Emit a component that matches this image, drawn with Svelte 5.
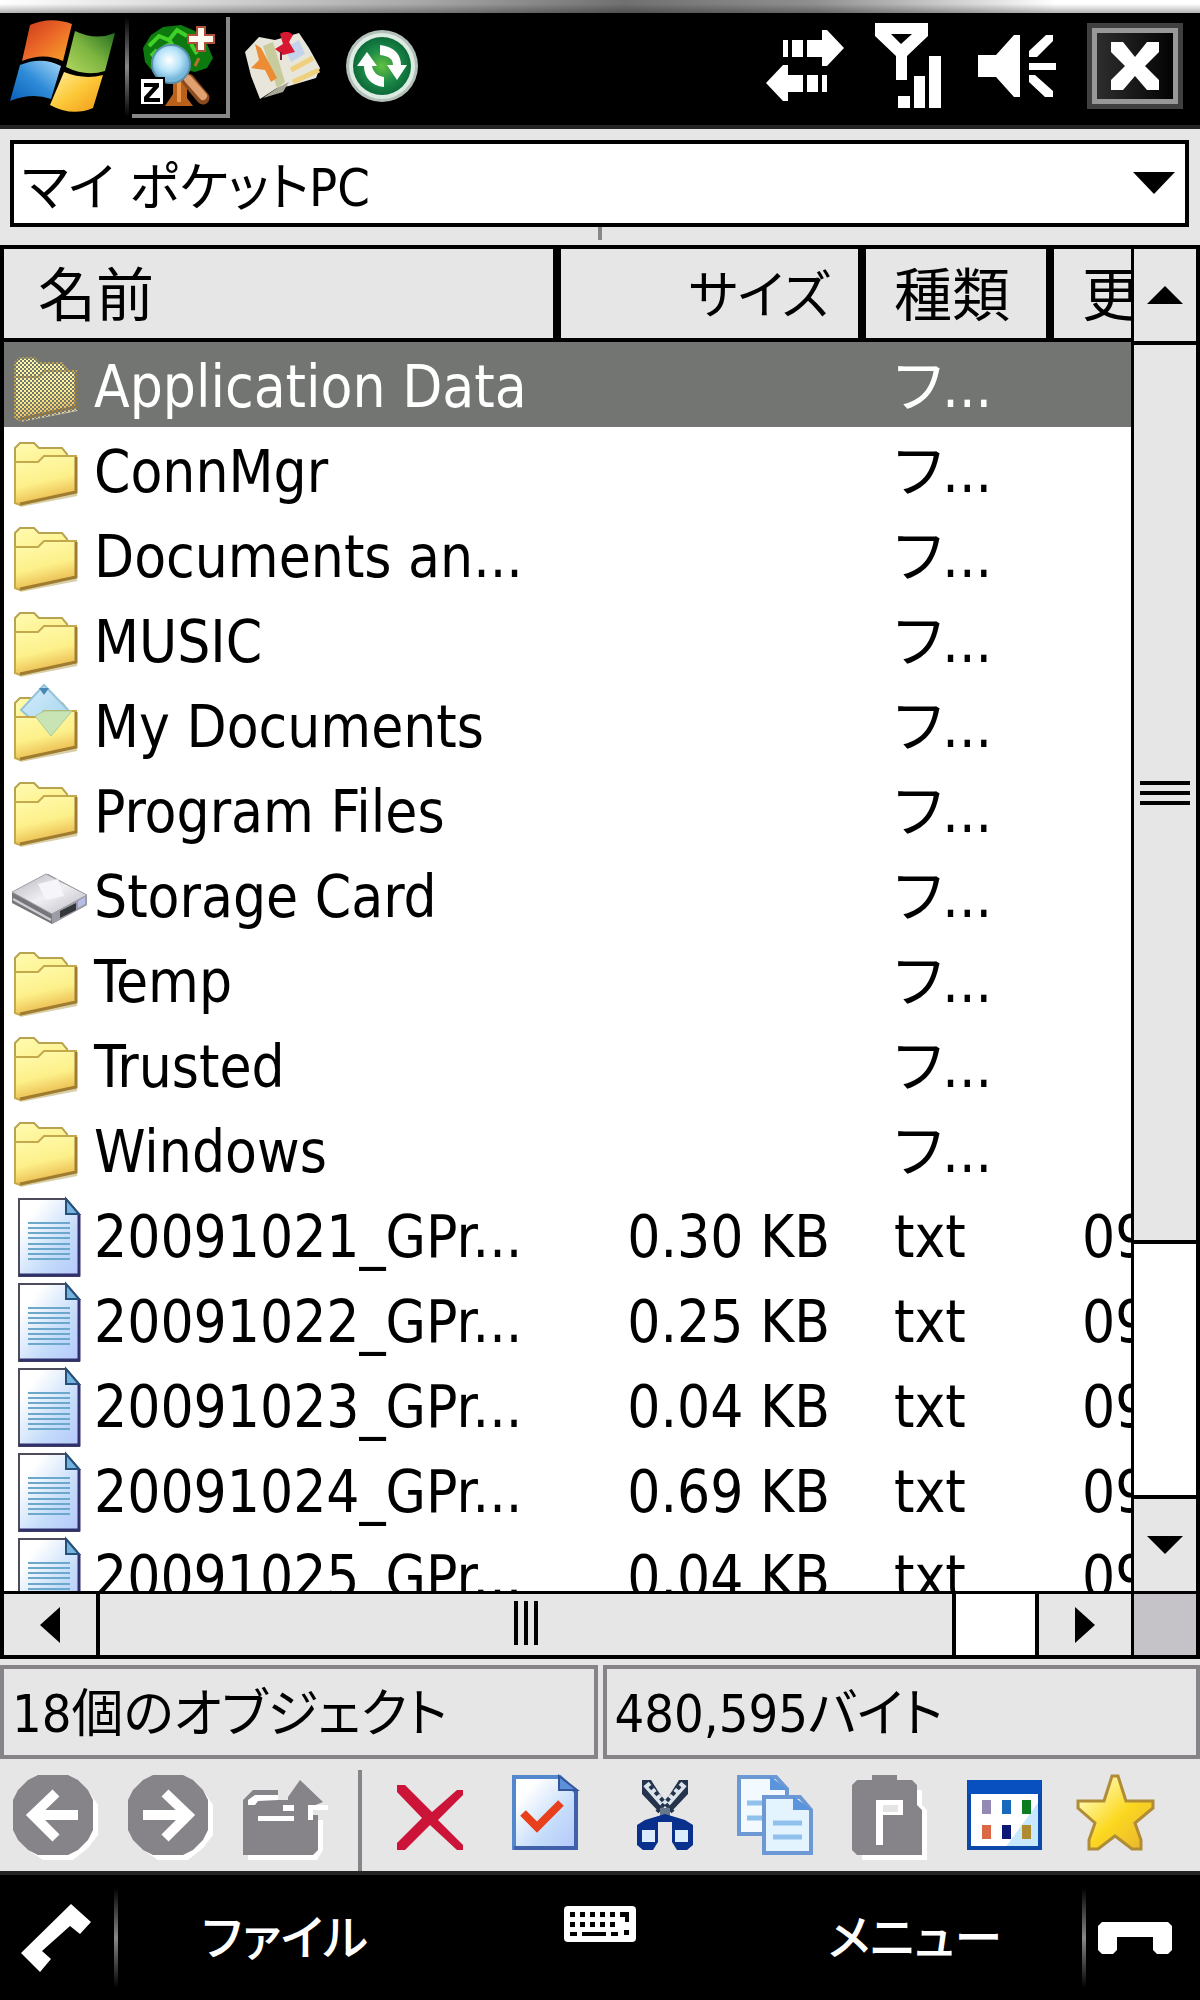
<script>
    const entries = [
        { name: 'Application Data', icon: 'folder', type: 'フ...' },
        { name: 'ConnMgr', icon: 'folder', type: 'フ...' },
        { name: 'Documents an...', icon: 'folder', type: 'フ...' },
        { name: 'MUSIC', icon: 'folder', type: 'フ...' },
        { name: 'My Documents', icon: 'documents', type: 'フ...' },
        { name: 'Program Files', icon: 'folder', type: 'フ...' },
        { name: 'Storage Card', icon: 'drive', type: 'フ...' },
        { name: 'Temp', icon: 'folder', type: 'フ...' },
        { name: 'Trusted', icon: 'folder', type: 'フ...' },
        { name: 'Windows', icon: 'folder', type: 'フ...' },
        { name: '20091021_GPr...', icon: 'text', size: '0.30 KB', type: 'txt', date: '09' },
        { name: '20091022_GPr...', icon: 'text', size: '0.25 KB', type: 'txt', date: '09' },
        { name: '20091023_GPr...', icon: 'text', size: '0.04 KB', type: 'txt', date: '09' },
        { name: '20091024_GPr...', icon: 'text', size: '0.69 KB', type: 'txt', date: '09' },
        { name: '20091025_GPr...', icon: 'text', size: '0.04 KB', type: 'txt', date: '09' }
    ];

    let selected = $state(0);
</script>

<!-- shared gradients -->
<svg class="defs" width="0" height="0" aria-hidden="true">
    <defs>
        <linearGradient id="gFolder" x1="0" y1="0" x2="0.3" y2="1">
            <stop offset="0" stop-color="#fffbb0" />
            <stop offset="0.6" stop-color="#fdf08a" />
            <stop offset="1" stop-color="#e9b94c" />
        </linearGradient>
        <linearGradient id="gPaper" x1="0" y1="0" x2="1" y2="1">
            <stop offset="0.2" stop-color="#ffffff" />
            <stop offset="0.65" stop-color="#c4dcfa" />
            <stop offset="1" stop-color="#b4c8fb" />
        </linearGradient>
        <linearGradient id="gBlueSheet" x1="0" y1="0" x2="1" y2="1">
            <stop offset="0" stop-color="#d6eefa" />
            <stop offset="1" stop-color="#9dd0ee" />
        </linearGradient>
        <linearGradient id="gMetal" x1="0" y1="0" x2="1" y2="1">
            <stop offset="0" stop-color="#b4b4b8" />
            <stop offset="0.5" stop-color="#f0f0f4" />
            <stop offset="1" stop-color="#b8b8c0" />
        </linearGradient>
        <linearGradient id="gRed" x1="0" y1="0" x2="1" y2="1">
            <stop offset="0" stop-color="#c8361a" />
            <stop offset="0.5" stop-color="#ec6a28" />
            <stop offset="1" stop-color="#f7a828" />
        </linearGradient>
        <linearGradient id="gGreen" x1="0" y1="1" x2="1" y2="0">
            <stop offset="0" stop-color="#b4d860" />
            <stop offset="0.5" stop-color="#7cb440" />
            <stop offset="1" stop-color="#1f6a20" />
        </linearGradient>
        <linearGradient id="gBlue" x1="0" y1="1" x2="1" y2="0">
            <stop offset="0" stop-color="#0a60b8" />
            <stop offset="0.5" stop-color="#2f8cd8" />
            <stop offset="1" stop-color="#a8d8f8" />
        </linearGradient>
        <linearGradient id="gYellow" x1="0" y1="0" x2="1" y2="1">
            <stop offset="0" stop-color="#fff0a0" />
            <stop offset="0.5" stop-color="#fcc838" />
            <stop offset="1" stop-color="#f09818" />
        </linearGradient>
        <radialGradient id="gSync">
            <stop offset="0" stop-color="#62c040" />
            <stop offset="0.6" stop-color="#1c8a48" />
            <stop offset="1" stop-color="#0c6a38" />
        </radialGradient>
        <radialGradient id="gLens" cx="0.45" cy="0.4">
            <stop offset="0" stop-color="#ffffff" />
            <stop offset="0.6" stop-color="#b8e4f8" />
            <stop offset="1" stop-color="#78b8dc" />
        </radialGradient>
        <linearGradient id="gStar" x1="0" y1="0" x2="1" y2="1">
            <stop offset="0.2" stop-color="#fff6a0" />
            <stop offset="0.55" stop-color="#fbd820" />
            <stop offset="1" stop-color="#e8b030" />
        </linearGradient>
        <pattern id="pDither" width="4" height="4" patternUnits="userSpaceOnUse">
            <rect width="2" height="2" fill="#737572" />
            <rect x="2" y="2" width="2" height="2" fill="#737572" />
        </pattern>
    </defs>
</svg>

<div class="screen">
    <div class="edge"></div>

    <header class="titlebar">
        <button class="start" aria-label="Start">
            <svg width="108" height="96" viewBox="0 0 108 96">
                <path d="M20 6 Q40 -3 62 5 L53 42 Q34 33 12 42 Z" fill="url(#gRed)" />
                <path d="M65 12 Q86 22 105 14 L95 52 Q76 58 56 48 Z" fill="url(#gGreen)" />
                <path d="M10 46 Q32 37 51 47 L41 80 Q22 73 0 82 Z" fill="url(#gBlue)" />
                <path d="M54 53 Q74 61 93 56 L83 89 Q62 98 40 86 Z" fill="url(#gYellow)" />
            </svg>
        </button>
        <span class="divider"></span>
        <button class="task active" aria-label="File manager">
            <svg width="80" height="84" viewBox="0 0 80 84">
                <path d="M34 52 L48 52 L48 74 L54 82 L26 82 L34 70 Z" fill="#b8601c" />
                <path d="M40 54 V78" stroke="#e89848" stroke-width="4" />
                <path d="M6 38 L4 24 L12 11 L24 3 L42 1 L56 7 L68 20 L74 34 L68 44 L56 48 L40 44 L14 48 Z" fill="#0d7a10" />
                <path d="M10 22 L20 12 L30 16 L38 6 L48 12 M24 24 L34 18 M12 32 L18 26 M52 20 L58 30" stroke="#42d028" stroke-width="4" fill="none" />
                <path d="M56 42 L60 34" stroke="#b8702c" stroke-width="3" />
                <path d="M49 56 L64 74" stroke="#8a4c20" stroke-width="13" stroke-linecap="round" />
                <path d="M49 55 L64 72" stroke="#e0a070" stroke-width="8" stroke-linecap="round" />
                <circle cx="32" cy="40" r="19" fill="url(#gLens)" stroke="#5c90a8" stroke-width="2" />
                <path d="M58 3 h8 v8 h9 v8 h-9 v8 h-8 v-8 h-9 v-8 h9 Z" fill="#fffaf0" stroke="#b05038" stroke-width="2" />
                <rect x="1" y="54" width="24" height="27" fill="#fff" stroke="#000" stroke-width="2" />
                <path d="M5 59 H20 V63 L10 74 H21 V78 H5 V73 L14 63 H5 Z" fill="#000" />
            </svg>
        </button>
        <button class="task" aria-label="Map">
            <svg width="78" height="68" viewBox="0 0 78 68">
                <path d="M2 20 L16 5 L32 8 L56 1 L66 16 L77 36 L73 46 L46 54 L34 56 L17 67 L8 44 Z" fill="#e8e6da" />
                <path d="M30 10 L42 50 L34 56 L20 14 Z" fill="#c8cc9c" />
                <path d="M12 12 L18 16 L34 46 L28 50 L22 38 L8 36 L16 28 Z" fill="#ec8c34" />
                <path d="M48 38 L70 26 M50 50 L76 38" stroke="#efd07c" stroke-width="5" />
                <path d="M42 16 L56 8 L62 22 L48 30 Z" fill="#c4d4ec" />
                <path d="M34 56 L46 50 L40 60 L20 66 Z" fill="#a8a898" />
                <path d="M37 2 Q44 -3 50 3 L46 10 L52 20 L40 23 L32 17 L40 12 Z" fill="#d81830" />
                <path d="M38 20 V28" stroke="#702030" stroke-width="2" />
            </svg>
        </button>
        <button class="task" aria-label="Sync">
            <svg width="74" height="74" viewBox="0 0 74 74">
                <circle cx="37" cy="37" r="36" fill="#b4c0ba" />
                <circle cx="37" cy="37" r="33" fill="#dcece2" />
                <circle cx="37" cy="37" r="29" fill="url(#gSync)" />
                <path d="M35 16 C50 18 56 26 56 36 H62 L52 51 L42 36 H48 C48 30 44 27 35 26 Z" fill="#fff" />
                <path d="M39 58 C26 57 19 48 19 37 H12 L22 23 L32 37 H27 C28 43 32 47 39 48 Z" fill="#fff" />
            </svg>
        </button>

        <div class="tray">
            <svg width="78" height="74" viewBox="0 0 78 74" fill="#fff">
                <path d="M17 11 h5 v17 h-5 Z M26 11 h11 v17 h-11 Z M41 11 h15 v-10 h5 L78 19 L61 37 h-5 v-9 h-15 Z" />
                <path d="M61 46 h-5 v17 h5 Z M52 46 h-11 v17 h11 Z M37 46 h-15 v-10 h-5 L0 54 L17 72 h5 v-9 h15 Z" />
            </svg>
            <svg width="72" height="86" viewBox="0 0 72 86" fill="#fff">
                <path d="M0 0 H53 V13 L32 33 V57 H21 V33 L0 13 Z M16 11 L26 21 L37 11 Z" fill-rule="evenodd" />
                <path d="M23 73 h12 v12 h-12 Z M39 53 h11 v32 h-11 Z M54 33 h12 v52 h-12 Z" />
            </svg>
            <svg width="78" height="64" viewBox="0 0 78 64" fill="#fff">
                <path d="M0 21 H18 L36 1 H42 V63 H36 L18 43 H0 Z" />
                <path d="M68 1 H75 V7 L59 23 H51 V17 Z M51 29 h27 v7 h-27 Z M51 41 H57 L75 57 V63 H67 L51 48 Z" />
            </svg>
            <button class="close" aria-label="Close">
                <svg width="48" height="48" viewBox="0 0 48 48">
                    <path d="M0 0 H12 L24 15 L36 0 H48 V10 L34 24 L48 38 V48 H36 L24 34 L12 48 H0 V38 L14 24 L0 10 Z" fill="#fff" />
                </svg>
            </button>
        </div>
    </header>

    <div class="address">
        <select aria-label="Location">
            <option>マイ ポケットPC</option>
        </select>
        <svg class="caret" width="42" height="22" viewBox="0 0 42 22"><path d="M0 0 H42 L21 22 Z" /></svg>
    </div>
    <div class="splitter"></div>

    <main class="browser">
        <div class="list">
            <table>
                <colgroup>
                    <col />
                    <col class="c-size" />
                    <col class="c-type" />
                    <col class="c-date" />
                </colgroup>
                <thead>
                    <tr>
                        <th class="first">名前</th>
                        <th class="size">サイズ</th>
                        <th>種類</th>
                        <th class="last">更</th>
                    </tr>
                </thead>
                <tbody>
                    {#each entries as entry, i}
                        <tr class:selected={i === selected} onclick={() => (selected = i)}>
                            <td>
                                <div class="name">
                                    <svg width="80" height="85" viewBox="0 0 80 85">
                                        {#if entry.icon === 'text'}
                                            <path d="M9 7 H56 L69 22 V84 H9 Z" fill="url(#gPaper)" stroke="#4c4c5c" stroke-width="2" />
                                            <path d="M9 83 H69 V22" fill="none" stroke="#30306c" stroke-width="3" />
                                            <path d="M56 7 L69 22 H56 Z" fill="#74b4dc" stroke="#24507c" stroke-width="2" />
                                            <path d="M18 31 H60 M18 36 H60 M18 41 H60 M18 46 H60 M18 52 H60 M18 57 H60 M18 62 H60 M18 67 H60" stroke="#6ca8cc" stroke-width="2" />
                                        {:else if entry.icon === 'drive'}
                                            <path d="M2 41 L38 22 L77 43 V53 L42 72 L2 51 Z" fill="#77777b" />
                                            <path d="M2 40 L36 22 L77 43 L42 62 Z" fill="url(#gMetal)" stroke="#a0a0a4" stroke-width="1" />
                                            <path d="M28 32 L48 27 L54 44 L36 48 Z" fill="#f6f6fa" />
                                            <path d="M3 47 L41 68" stroke="#d0d0d4" stroke-width="2" />
                                            <path d="M42 62 L77 43 V53 L42 72 Z" fill="#9c9ca4" />
                                            <path d="M50 59 L66 51 V58 L50 66 Z" fill="#33363a" />
                                            <path d="M68 49 L75 45 V52 L68 56 Z" fill="#b8bce8" />
                                        {:else}
                                            <path d="M10 78 L67 67" stroke="#d8cfa8" stroke-width="4" />
                                            <path d="M5 74 V21 L10 16 H24 L29 21 H52 L57 27 V60 Z" fill="url(#gFolder)" stroke="#b8a450" stroke-width="2" />
                                            {#if entry.icon === 'documents'}
                                                <path d="M11 28 L34 3 L62 32 L40 54 Z" fill="url(#gBlueSheet)" stroke="#94c4dc" stroke-width="2" />
                                                <path d="M29 6 H39 L34 13 Z" fill="#4888b4" />
                                            {/if}
                                            <path d="M5 76 V35 H28 L34 29 H66 V65 L10 78 Z" fill="url(#gFolder)" stroke="#c4a84c" stroke-width="2" />
                                            <path d="M66 30 V65 L10 77" fill="none" stroke="#a07c30" stroke-width="3" />
                                            {#if entry.icon === 'documents'}
                                                <path d="M25 34 L34 29 H62 L41 54 Z" fill="#c8e4b4" stroke="#a8cc98" stroke-width="1" />
                                            {/if}
                                            {#if i === selected}
                                                <path d="M4 79 V20 L10 15 H24 L29 20 H52 L68 30 V68 L12 80 Z" fill="url(#pDither)" />
                                            {/if}
                                        {/if}
                                    </svg>
                                    <span>{entry.name}</span>
                                </div>
                            </td>
                            <td class="size">{entry.size ?? ''}</td>
                            <td>{entry.type}</td>
                            <td class="date">{entry.date ?? ''}</td>
                        </tr>
                    {/each}
                </tbody>
            </table>
        </div>

        <div class="vscroll">
            <button class="up" aria-label="Scroll up">
                <svg width="36" height="18" viewBox="0 0 36 18"><path d="M18 0 L36 18 H0 Z" /></svg>
            </button>
            <div class="thumb"><i></i><i></i><i></i></div>
            <div class="track"></div>
            <button class="down" aria-label="Scroll down">
                <svg width="36" height="18" viewBox="0 0 36 18"><path d="M0 0 H36 L18 18 Z" /></svg>
            </button>
        </div>

        <div class="hscroll">
            <button aria-label="Scroll left">
                <svg width="20" height="36" viewBox="0 0 20 36"><path d="M20 0 V36 L0 18 Z" /></svg>
            </button>
            <div class="thumb"><i></i><i></i><i></i></div>
            <div class="track"></div>
            <button aria-label="Scroll right">
                <svg width="20" height="36" viewBox="0 0 20 36"><path d="M0 0 L20 18 L0 36 Z" /></svg>
            </button>
        </div>
        <div class="corner"></div>
    </main>

    <div class="status">
        <div>18個のオブジェクト</div>
        <div>480,595バイト</div>
    </div>

    <div class="toolbar">
        <button aria-label="Back" disabled>
            <svg width="90" height="90" viewBox="0 0 90 90">
                <path d="M30 10 H60 L75 20 L85 35 V65 L75 78 L60 90 H30 L12 78 Z" fill="#fff" />
                <path d="M25 5 H55 L65 10 L75 20 L80 30 V60 L75 70 L65 80 L55 85 H25 L15 80 L5 70 L0 60 V30 L5 20 L15 10 Z" fill="#868488" />
                <path d="M65 45 H20 M43 23 L20 45 L43 68" fill="none" stroke="#fff" stroke-width="10" />
            </svg>
        </button>
        <button aria-label="Forward" disabled>
            <svg width="90" height="90" viewBox="0 0 90 90">
                <path d="M30 10 H60 L75 20 L85 35 V65 L75 78 L60 90 H30 L12 78 Z" fill="#fff" />
                <path d="M25 5 H55 L65 10 L75 20 L80 30 V60 L75 70 L65 80 L55 85 H25 L15 80 L5 70 L0 60 V30 L5 20 L15 10 Z" fill="#868488" />
                <path d="M15 45 H60 M37 23 L60 45 L37 68" fill="none" stroke="#fff" stroke-width="10" />
            </svg>
        </button>
        <button aria-label="Up one level" disabled>
            <svg width="90" height="90" viewBox="0 0 90 90">
                <path d="M5 90 V50 H80 V80 L74 90 Z" fill="#fff" />
                <path d="M0 85 V30 L5 25 L10 20 H35 V30 H45 V27 L57 10 L80 32 L70 36 V45 H75 V80 L70 85 Z" fill="#868488" />
                <path d="M5 30 L12 25 H35 V30 L15 31 L12 35 H5 Z M15 46 h36 v5 h-36 Z M40 35 h11 v6 h-11 Z M65 35 h20 v5 h-15 v10 h-5 Z" fill="#fff" />
            </svg>
        </button>
        <span class="sep"></span>
        <button aria-label="Delete">
            <svg width="90" height="90" viewBox="0 0 90 90">
                <path d="M12 15 H20 L47 42 L72 20 H78 V25 L53 50 L78 75 V80 H72 L45 55 L20 80 H12 V73 L37 48 L12 22 Z" fill="#cc1438" />
            </svg>
        </button>
        <button aria-label="Properties">
            <svg width="90" height="90" viewBox="0 0 90 90">
                <path d="M14 7 H60 L76 22 V78 H14 Z" fill="url(#gPaper)" stroke="#5488cc" stroke-width="4" />
                <path d="M14 78 H76 V20" fill="none" stroke="#4060ac" stroke-width="4" />
                <path d="M59 6 L77 20 H59 Z" fill="#5c90d8" stroke="#34549c" stroke-width="2" />
                <path d="M23 43 L37 57 L61 33" fill="none" stroke="#e8401c" stroke-width="8" />
            </svg>
        </button>
        <button aria-label="Cut">
            <svg width="90" height="90" viewBox="0 0 90 90">
                <path d="M27 10 H36 L50 32 L64 10 H73 V24 L56 42 H44 L27 24 Z" fill="#24344c" />
                <path d="M31 14 L52 38 M69 14 L48 38" stroke="#dce4ec" stroke-width="7" />
                <path d="M35 16 L58 42 M65 16 L42 42" stroke="#24344c" stroke-width="4" stroke-dasharray="4 4" />
                <path d="M45 38 h10 v12 h-10 Z" fill="#68788c" />
                <path d="M22 55 L30 50 L50 44 L70 50 L78 55 V75 L72 80 H62 L57 72 V52 H43 V72 L38 80 H28 L22 75 Z" fill="#08308c" />
                <path d="M27 60 h13 v12 h-13 Z M60 60 h13 v12 h-13 Z" fill="#dcecff" />
            </svg>
        </button>
        <button aria-label="Copy">
            <svg width="90" height="90" viewBox="0 0 90 90">
                <path d="M9 7 H46 L57 19 V64 H9 Z" fill="#f2faff" stroke="#6c98d4" stroke-width="4" />
                <path d="M40 6 L58 20 H40 Z" fill="#5a94dc" />
                <path d="M17 33 h24 M17 48 h24" stroke="#90c0ec" stroke-width="5" />
                <path d="M34 27 H70 L81 40 V83 H34 Z" fill="#e4f4ff" stroke="#6c98d4" stroke-width="4" />
                <path d="M63 26 L82 40 H63 Z" fill="#5a94dc" />
                <path d="M43 53 h29 M43 67 h29" stroke="#90c0ec" stroke-width="5" />
            </svg>
        </button>
        <button aria-label="Paste" disabled>
            <svg width="90" height="90" viewBox="0 0 90 90">
                <path d="M17 85 V90 H82 V40 L77 35 V20 H70 V80 Z" fill="#fff" />
                <path d="M12 10 H27 V5 H52 V10 H67 L72 15 V35 L77 40 V85 H12 L7 80 V15 Z" fill="#868488" />
                <path d="M31 30 H58 V45 H38 V75 H31 Z" fill="#fff" />
                <path d="M38 35 H53 V42 H38 Z" fill="#e4e4e4" />
            </svg>
        </button>
        <button aria-label="View">
            <svg width="90" height="90" viewBox="0 0 90 90">
                <path d="M9 14 H80 V78 H9 Z" fill="#fff" />
                <path d="M45 78 L80 30 V78 Z" fill="#c8e8ff" />
                <path d="M9 12 H80 V78 H9 Z" fill="none" stroke="#0c48a8" stroke-width="4" />
                <path d="M8 10 h73 v14 h-73 Z" fill="#0850c0" />
                <path d="M22 30 h9 v14 h-9 Z" fill="#9488b4" />
                <path d="M42 30 h9 v14 h-9 Z" fill="#1868bc" />
                <path d="M62 30 h9 v14 h-9 Z" fill="#0c7c20" />
                <path d="M22 55 h9 v14 h-9 Z" fill="#dc6848" />
                <path d="M42 55 h9 v14 h-9 Z" fill="#0c1878" />
                <path d="M62 55 h9 v14 h-9 Z" fill="#b08c30" />
            </svg>
        </button>
        <button aria-label="Favorites">
            <svg width="90" height="90" viewBox="0 0 90 90">
                <path d="M37 6 H43 L51 31 H78 V38 L60 53 L66 70 V79 H57 L40 66 L23 79 H14 V70 L20 53 L3 38 V31 H29 Z" fill="url(#gStar)" stroke="#b08c38" stroke-width="3" />
            </svg>
        </button>
    </div>

    <footer class="softkeys">
        <button class="call" aria-label="Call">
            <svg width="72" height="68" viewBox="0 0 72 68"><path d="M50 0 L70 18 L59 30 L49 22 L21 47 L30 55 L19 68 L0 49 Z" fill="#fff" /></svg>
        </button>
        <span class="divider"></span>
        <button class="key left">ファイル</button>
        <button class="keyboard" aria-label="Keyboard">
            <svg width="72" height="36" viewBox="0 0 72 36">
                <rect width="72" height="36" rx="4" fill="#fff" />
                <path d="M6 6 h5 v5 h-5 Z M16 6 h5 v5 h-5 Z M26 6 h5 v5 h-5 Z M36 6 h5 v5 h-5 Z M46 6 h5 v5 h-5 Z M56 6 h9 v10 h-4 v-5 h-5 Z M6 16 h5 v5 h-5 Z M16 16 h5 v5 h-5 Z M26 16 h5 v5 h-5 Z M36 16 h5 v5 h-5 Z M46 16 h5 v5 h-5 Z M6 26 h7 v4 h-7 Z M18 26 h24 v4 h-24 Z M47 26 h7 v4 h-7 Z M60 24 h5 v5 h-5 Z" fill="#000" />
            </svg>
        </button>
        <button class="key right">メニュー</button>
        <span class="divider"></span>
        <button class="end" aria-label="End call">
            <svg width="74" height="32" viewBox="0 0 74 32"><path d="M4 0 H70 L74 4 V28 L70 32 H59 L55 28 V15 H19 V28 L15 32 H4 L0 28 V4 Z" fill="#fff" /></svg>
        </button>
    </footer>
</div>

<style>
    :global(body) {
        margin: 0;
        background: #000;
    }

    .defs {
        position: absolute;
    }

    .screen {
        display: flex;
        flex-direction: column;
        height: 100vh;
        overflow: hidden;
        background: #e6e6e6;
        color: #000;
        font-family: "DejaVu Sans Condensed", "Noto Sans CJK JP", sans-serif;
        font-size: 58px;
        line-height: 80px;
        font-feature-settings: "palt";
    }

    svg {
        display: block;
        flex: none;
    }

    button {
        display: flex;
        align-items: center;
        justify-content: center;
        box-sizing: border-box;
        margin: 0;
        padding: 0;
        border: 0;
        background: none;
        color: inherit;
        font: inherit;
        font-feature-settings: inherit;
        cursor: pointer;
    }

    .edge {
        flex: none;
        height: 13px;
        background:
            linear-gradient(rgba(0, 0, 0, 0) 30%, rgba(0, 0, 0, 0.3)),
            linear-gradient(90deg, #fff, #a8a8a8 35%, #707070 52%, #909090 68%, #fff 88%, #fff);
    }

    /* title bar */
    .titlebar {
        display: flex;
        flex: none;
        align-items: flex-start;
        box-sizing: border-box;
        height: 116px;
        padding: 4px 17px 0 10px;
        border-bottom: 4px solid #242424;
        background: #000;
    }

    .divider {
        flex: none;
        width: 4px;
        height: 100px;
        background: linear-gradient(#000, #888, #000);
    }

    .start {
        height: 100px;
        margin-right: 7px;
    }

    .task {
        height: 101px;
        margin-left: 12px;
        padding-bottom: 4px;
    }

    .task + .task {
        margin-left: 24px;
    }

    .task.active {
        width: 98px;
        margin-left: 3px;
        padding-bottom: 0;
        border-right: 4px solid #888;
        border-bottom: 4px solid #888;
    }

    .task.active + .task {
        margin-left: 13px;
    }

    .tray {
        display: flex;
        align-items: center;
        gap: 31px;
        height: 97px;
        margin-left: auto;
    }

    .close {
        width: 96px;
        height: 86px;
        border: 5px solid #404040;
        outline: 5px solid #989898;
        outline-offset: -10px;
        background: linear-gradient(90deg, #303030, #000);
    }

    /* address */
    .address {
        position: relative;
        flex: none;
        margin: 11px 11px 0 10px;
    }

    select {
        display: block;
        box-sizing: border-box;
        width: 100%;
        height: 87px;
        padding: 4px 64px 0 8px;
        border: 4px solid #000;
        border-radius: 0;
        appearance: none;
        background: #fff;
        color: #000;
        font: inherit;
        font-size: 52px;
        font-feature-settings: inherit;
    }

    .caret {
        position: absolute;
        top: 32px;
        right: 14px;
        pointer-events: none;
    }

    .splitter {
        flex: none;
        width: 4px;
        height: 13px;
        margin: 0 auto 5px;
        background: #888;
    }

    /* file list */
    .browser {
        display: grid;
        flex: 1 1 0;
        grid-template-columns: minmax(0, 1fr) 65px;
        grid-template-rows: minmax(0, 1fr) 64px;
        min-height: 0;
        border: 4px solid #000;
    }

    .list {
        overflow: hidden;
        background: #fff;
    }

    table {
        width: 100%;
        border-collapse: separate;
        border-spacing: 0;
        table-layout: fixed;
    }

    .c-size {
        width: 305px;
    }

    .c-type {
        width: 188px;
    }

    .c-date {
        width: 77px;
    }

    th,
    td {
        box-sizing: border-box;
        overflow: hidden;
        padding: 5px 0 0 28px;
        text-align: left;
        white-space: nowrap;
    }

    th {
        height: 93px;
        padding: 5px 28px 0;
        border-right: 8px solid #000;
        border-bottom: 4px solid #000;
        background: #e6e6e6;
        font-weight: normal;
    }

    th.first {
        padding-left: 34px;
    }

    th.last {
        padding-right: 0;
        border-right: 0;
    }

    th.size {
        font-size: 52px;
    }

    td {
        height: 85px;
        text-overflow: clip;
    }

    td:first-child {
        padding: 0;
    }

    .size {
        text-align: right;
    }

    td.size {
        padding-right: 36px;
    }

    .name {
        display: flex;
        gap: 4px;
        padding-left: 6px;
        height: 85px;
    }

    .name span {
        padding-top: 5px;
    }

    .selected {
        background: #737572;
        color: #fff;
    }

    /* scroll bars */
    .vscroll {
        display: flex;
        flex-direction: column;
        border-left: 3px solid #000;
    }

    .vscroll button {
        flex: none;
        height: 92px;
    }

    .vscroll .thumb {
        display: flex;
        flex: 900;
        flex-direction: column;
        align-items: center;
        justify-content: center;
        gap: 6px;
        border-top: 4px solid #000;
        border-bottom: 4px solid #000;
    }

    .vscroll .thumb i {
        width: 50px;
        height: 4px;
        background: #000;
    }

    .vscroll .track {
        flex: 252;
        border-bottom: 4px solid #000;
    }

    .track {
        background: #fff;
    }

    .hscroll {
        display: flex;
        border-top: 3px solid #000;
    }

    .hscroll button {
        flex: none;
        width: 92px;
    }

    .hscroll .thumb {
        display: flex;
        flex: 855;
        align-items: center;
        justify-content: center;
        gap: 6px;
        border-right: 4px solid #000;
        border-left: 4px solid #000;
    }

    .hscroll .thumb i {
        width: 4px;
        height: 44px;
        margin-bottom: 4px;
        background: #000;
    }

    .hscroll .track {
        flex: 79;
        border-right: 4px solid #000;
    }

    .corner {
        border-top: 3px solid #000;
        border-left: 3px solid #000;
        background: #c6c3c8;
    }

    /* status bar */
    .status {
        display: flex;
        flex: none;
        gap: 5px;
        padding-top: 6px;
        font-size: 52px;
    }

    .status div {
        flex: 1 1 0;
        box-sizing: border-box;
        height: 94px;
        padding: 5px 8px 0;
        border: 4px solid #868488;
        overflow: hidden;
        white-space: nowrap;
    }

    /* tool bar */
    .toolbar {
        display: flex;
        flex: none;
        height: 112px;
        border-bottom: 4px solid #242424;
    }

    .toolbar button {
        flex: none;
        width: 115px;
    }

    .sep {
        flex: none;
        width: 4px;
        margin: 11px 10px 0 13px;
        background: #868488;
    }

    /* soft keys */
    .softkeys {
        display: flex;
        flex: none;
        align-items: center;
        height: 125px;
        background: #000;
        color: #fff;
        font-size: 48px;
        font-weight: 500;
    }

    .softkeys .call,
    .softkeys .end {
        width: 114px;
    }

    .softkeys .end {
        justify-content: flex-start;
        padding-left: 12px;
    }

    .softkeys .key {
        flex: 1 1 0;
        height: 100%;
    }

    .key.left {
        padding-right: 112px;
    }

    .key.right {
        padding-left: 112px;
    }

    .keyboard {
        height: 64px;
        align-items: flex-start;
    }
</style>
